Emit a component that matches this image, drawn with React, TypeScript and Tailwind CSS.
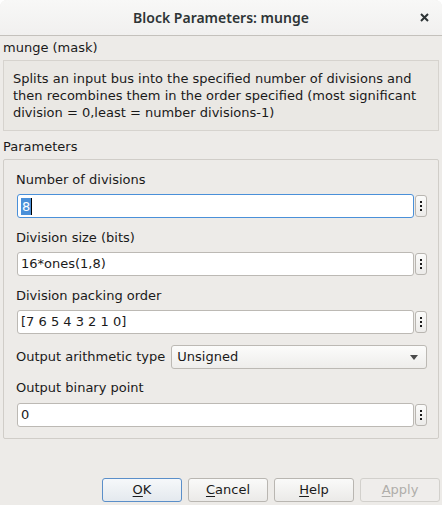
import React from 'react';

const font = { fontFamily: '"DejaVu Sans", "Liberation Sans", sans-serif' };
const titleFont = { fontFamily: '"Noto Sans", "DejaVu Sans", sans-serif' };

const MenuButton: React.FC = () => (
    <div className="ml-[1px] mt-[1px] w-[12px] h-[22px] shrink-0 rounded-[3px] border border-[#b9b6b1] bg-gradient-to-b from-[#fbfbfa] to-[#ecebe9] flex flex-col items-center justify-center gap-[2px]">
        <span className="w-[2px] h-[2px] bg-[#1a1a1a]" />
        <span className="w-[2px] h-[2px] bg-[#1a1a1a]" />
        <span className="w-[2px] h-[2px] bg-[#1a1a1a]" />
    </div>
);

interface FieldProps {
    label: string;
    value: string;
    focused?: boolean;
    gapTop: string;
    gapInput: string;
}

const Field: React.FC<FieldProps> = ({ label, value, focused, gapTop, gapInput }) => (
    <div className={gapTop}>
        <div className="h-[16px] leading-[16px] text-[13px] text-[#1a1a1a]">{label}</div>
        <div className={`flex items-start ${gapInput}`}>
            <div
                className={`ml-[1px] flex-1 h-[24px] rounded-[3px] bg-white flex items-center pl-[3px] text-[13px] text-[#1a1a1a] border ${
                    focused ? 'border-[#4a90d9]' : 'border-[#bcb9b4]'
                }`}
            >
                {focused ? (
                    <span className="flex items-center">
                        <span className="bg-[#4a90d9] text-white leading-[17px] px-[1px]">{value}</span>
                        <span className="w-[1px] h-[17px] bg-black" />
                    </span>
                ) : (
                    <span>{value}</span>
                )}
            </div>
            <MenuButton />
        </div>
    </div>
);

const Btn: React.FC<{ first: string; rest: string; primary?: boolean; disabled?: boolean }> = ({ first, rest, primary, disabled }) => (
    <div
        className={`w-[80px] h-[24px] rounded-[3px] border flex items-center justify-center text-[13px] ${
            primary
                ? 'border-[#5b8fc9] bg-gradient-to-b from-[#f6f8fa] to-[#e4e9ee] text-[#1a1a1a]'
                : disabled
                ? 'border-[#d2d0cc] bg-[#efedeb] text-[#b0aeaa]'
                : 'border-[#b9b6b1] bg-gradient-to-b from-[#fafaf9] to-[#ebeae8] text-[#1a1a1a]'
        }`}
    >
        <span>
            <u className="underline-offset-[2px]">{first}</u>
            {rest}
        </span>
    </div>
);

export default function App() {
    return (
        <div className="w-[442px] h-[505px] bg-white" style={font}>
            <div className="w-[442px] h-[505px] rounded-t-[7px] overflow-hidden bg-[#edebe8] flex flex-col">
                {/* title bar */}
                <div className="h-[36px] shrink-0 bg-gradient-to-b from-[#f8f8f7] to-[#f1f0ef] border-b border-[#c4c1bc] relative flex items-center justify-center">
                    <span className="text-[14px] font-semibold text-[#2e3436]" style={titleFont}>
                        Block Parameters: munge
                    </span>
                    <svg className="absolute left-[420px] top-[13px]" width="9" height="9" viewBox="0 0 9 9">
                        <path d="M1 1 L8 8 M8 1 L1 8" stroke="#2e3436" strokeWidth="2" />
                    </svg>
                </div>

                <div className="mt-[4px] pl-[3px] h-[16px] leading-[16px] text-[13px] text-[#1a1a1a]">munge (mask)</div>

                <div className="mt-[4px] mx-[3px] w-[436px] border border-[#d6d3ce] bg-[#eae8e4] pt-[9px] pb-[9px] pl-[9px] text-[13px] leading-[17px] text-[#1a1a1a]">
                    Splits an input bus into the specified number of divisions and
                    <br />
                    then recombines them in the order specified (most significant
                    <br />
                    division = 0,least = number divisions-1)
                </div>

                <div className="mt-[8px] pl-[3px] h-[16px] leading-[16px] text-[13px] text-[#1a1a1a]">Parameters</div>

                <div className="mt-[4px] mx-[3px] w-[436px] border border-[#d0cdc8] rounded-[2px] pt-[12px] pb-[11px] pl-[12px] pr-[11px]">
                    <Field label="Number of divisions" value="8" focused gapTop="" gapInput="mt-[6px]" />
                    <Field label="Division size (bits)" value="16*ones(1,8)" gapTop="mt-[12px]" gapInput="mt-[6px]" />
                    <Field label="Division packing order" value="[7 6 5 4 3 2 1 0]" gapTop="mt-[12px]" gapInput="mt-[6px]" />

                    <div className="mt-[11px] flex items-center h-[24px]">
                        <span className="text-[13px] text-[#1a1a1a] whitespace-nowrap">Output arithmetic type</span>
                        <div className="ml-[6px] flex-1 h-[24px] rounded-[3px] border border-[#bcb9b4] bg-gradient-to-b from-[#fcfcfb] to-[#eeedeb] flex items-center justify-between pl-[5px] pr-[8px] text-[13px] text-[#1a1a1a]">
                            <span>Unsigned</span>
                            <svg width="8" height="5" viewBox="0 0 8 5">
                                <path d="M0 0 H8 L4 5 Z" fill="#4a4a4a" />
                            </svg>
                        </div>
                    </div>

                    <Field label="Output binary point" value="0" gapTop="mt-[11px]" gapInput="mt-[7px]" />
                </div>

                <div className="flex-1" />

                <div className="flex justify-end gap-[6px] pr-[2px] mb-[3px]">
                    <Btn first="O" rest="K" primary />
                    <Btn first="C" rest="ancel" />
                    <Btn first="H" rest="elp" />
                    <Btn first="A" rest="pply" disabled />
                </div>
            </div>
        </div>
    );
}
